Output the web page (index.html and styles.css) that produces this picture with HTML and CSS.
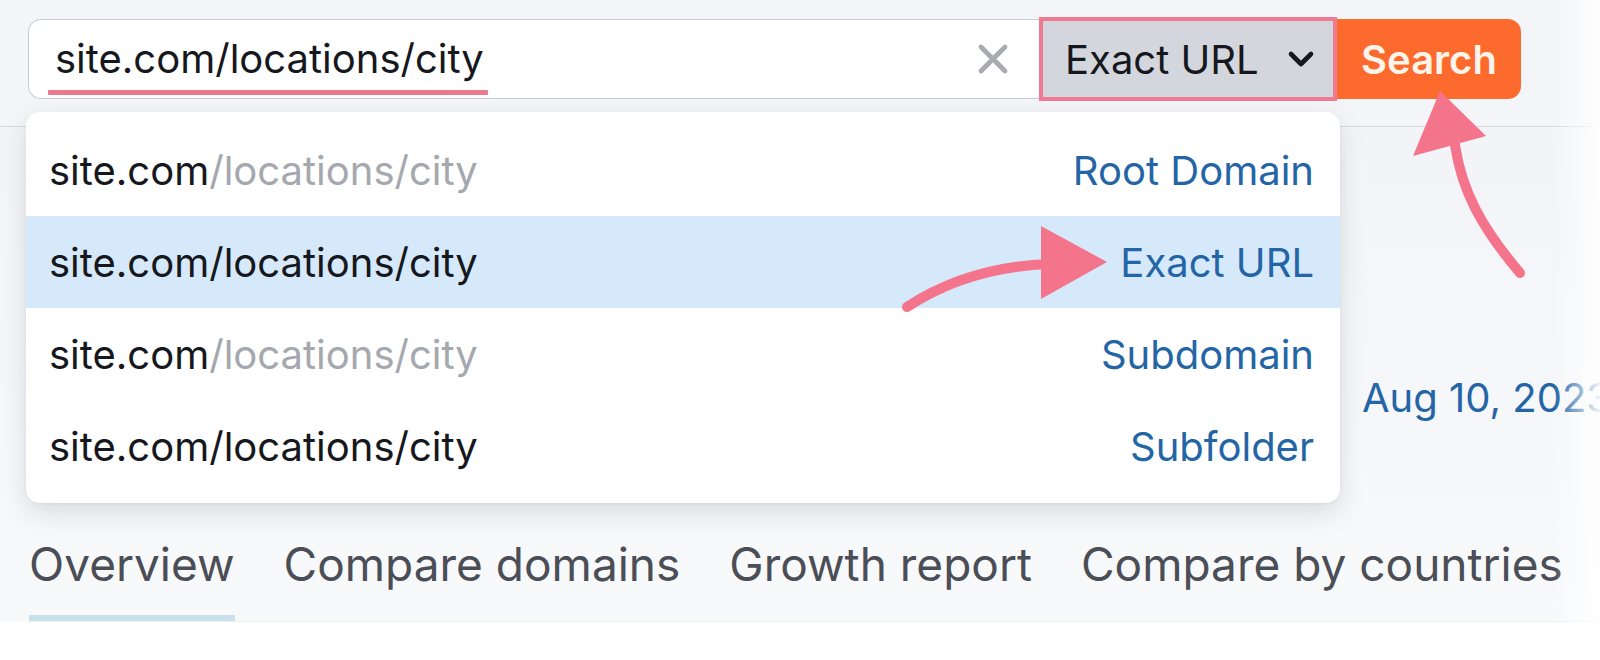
FILE: index.html
```html
<!DOCTYPE html>
<html lang="en">
<head>
<meta charset="utf-8">
<title>Search</title>
<link rel="stylesheet" href="styles.css">
</head>
<body>
<div class="page">
  <header class="header">
    <div class="search">
      <div class="input">
        <span class="query">site.com/locations/city</span>
        <svg class="clear" viewBox="0 0 32 32" width="32" height="32" aria-hidden="true">
          <path d="M4 4 L28 28 M28 4 L4 28" stroke="#a9abb0" stroke-width="4.8" stroke-linecap="round" fill="none"/>
        </svg>
      </div>
      <div class="select">
        <span>Exact URL</span>
        <svg class="chev" viewBox="0 0 30 20" width="30" height="20" aria-hidden="true">
          <path d="M5 5 L15 15 L25 5" stroke="#16181d" stroke-width="4.6" stroke-linecap="round" stroke-linejoin="round" fill="none"/>
        </svg>
      </div>
      <button class="btn">Search</button>
    </div>
  </header>

  <main class="main">
    <div class="summary">
      <span class="date">Aug 10, 2023</span>
    </div>
    <nav class="tabs">
      <span class="tab active">Overview</span>
      <span class="tab">Compare domains</span>
      <span class="tab">Growth report</span>
      <span class="tab">Compare by countries</span>
    </nav>
  </main>
  <div class="below"></div>

  <div class="dropdown">
    <div class="row"><span class="url">site.com<span class="path">/locations/city</span></span><span class="type">Root Domain</span></div>
    <div class="row selected"><span class="url">site.com/locations/city</span><span class="type">Exact URL</span></div>
    <div class="row"><span class="url">site.com<span class="path">/locations/city</span></span><span class="type">Subdomain</span></div>
    <div class="row"><span class="url">site.com/locations/city</span><span class="type">Subfolder</span></div>
  </div>

  <svg class="arrows" viewBox="0 0 1600 660" width="1600" height="660" aria-hidden="true">
    <path d="M907 307 C 945 282, 990 266, 1050 264" stroke="#f4748c" stroke-width="10" stroke-linecap="round" fill="none"/>
    <polygon points="1041,226 1107,262 1041,299" fill="#f4748c"/>
    <path d="M1520 273 C 1482 228, 1462 192, 1455 145" stroke="#f4748c" stroke-width="10" stroke-linecap="round" fill="none"/>
    <polygon points="1440,91 1413,156 1486,136" fill="#f4748c"/>
  </svg>
  <div class="fade"></div>
</div>
</body>
</html>
```

FILE: styles.css
```css
* { box-sizing: border-box; }

html, body {
  margin: 0;
  padding: 0;
}

body {
  background: #ffffff;
  font-family: Inter, "Noto Sans", "Liberation Sans", sans-serif;
  color: #16181d;
}

.page {
  position: relative;
  width: 1600px;
  height: 660px;
  overflow: hidden;
  background: #ffffff;
}

/* Header with search bar */
.header {
  height: 127px;
  padding: 19px 0 0 28px;
  background: #f4f5f8;
  border-bottom: 1px solid #d8d9de;
}

.search {
  display: flex;
  align-items: center;
  height: 80px;
}

.input {
  display: flex;
  align-items: center;
  justify-content: space-between;
  width: 1011px;
  height: 80px;
  padding: 0 30px 0 26px;
  background: #ffffff;
  border: 1px solid #c9cbd1;
  border-right: none;
  border-radius: 13px 0 0 13px;
}

.query {
  position: relative;
  font-size: 40px;
  color: #16181d;
  line-height: 1;
}

.query::after {
  content: "";
  position: absolute;
  left: -7px;
  right: -4px;
  bottom: -16px;
  height: 5px;
  background: #ec7a8f;
  border-radius: 1px;
}

.clear {
  display: block;
}

.select {
  display: flex;
  align-items: center;
  justify-content: space-between;
  width: 298px;
  height: 84px;
  padding: 0 17px 0 22px;
  background: #d3d6dc;
  border: 4px solid #ef7a91;
  font-size: 40px;
  color: #16181d;
}

.chev {
  display: block;
}

.btn {
  width: 184px;
  height: 80px;
  border: none;
  margin: 0;
  padding: 0;
  background: #fd6a2e;
  color: #fff4ea;
  border-radius: 0 13px 13px 0;
  font-family: Inter, "Noto Sans", "Liberation Sans", sans-serif;
  font-size: 40px;
  font-weight: 600;
}

/* Main content */
.main {
  background: linear-gradient(#f3f4f7, #f8f9fb);
  padding-left: 29px;
}

.summary {
  height: 393px;
  padding: 246px 0 0 1333px;
}

.date {
  display: block;
  font-size: 40px;
  line-height: 50px;
  color: #2465a6;
  white-space: nowrap;
}

.tabs {
  display: flex;
  gap: 49px;
  border-bottom: 1px solid #eceef1;
}

.tab {
  padding: 19px 0 26px;
  line-height: 50px;
  font-size: 46px;
  color: #4b4e56;
  border-bottom: 6px solid transparent;
  white-space: nowrap;
}

.tab.active {
  border-bottom-color: #c8e1ec;
}

.below {
  height: 38px;
  background: #ffffff;
}

/* Dropdown overlay */
.dropdown {
  position: absolute;
  left: 26px;
  top: 112px;
  width: 1314px;
  height: 391px;
  padding: 12px 0;
  background: #ffffff;
  border-radius: 14px;
  box-shadow: 0 10px 26px rgba(30, 35, 50, 0.13), 0 1px 3px rgba(30, 35, 50, 0.06);
}

.row {
  display: flex;
  align-items: center;
  justify-content: space-between;
  height: 92px;
  padding: 0 26px 0 23px;
  font-size: 40px;
}

.row.selected {
  background: #d5e9fa;
}

.url {
  color: #16181d;
}

.path {
  color: #a5a8ae;
}

.type {
  color: #2465a6;
}

/* Annotation arrows */
.arrows {
  position: absolute;
  left: 0;
  top: 0;
  pointer-events: none;
}

.fade {
  position: absolute;
  right: 0;
  top: 0;
  width: 46px;
  height: 660px;
  background: linear-gradient(to right, rgba(255,255,255,0), rgba(255,255,255,0.92));
  pointer-events: none;
}
```
